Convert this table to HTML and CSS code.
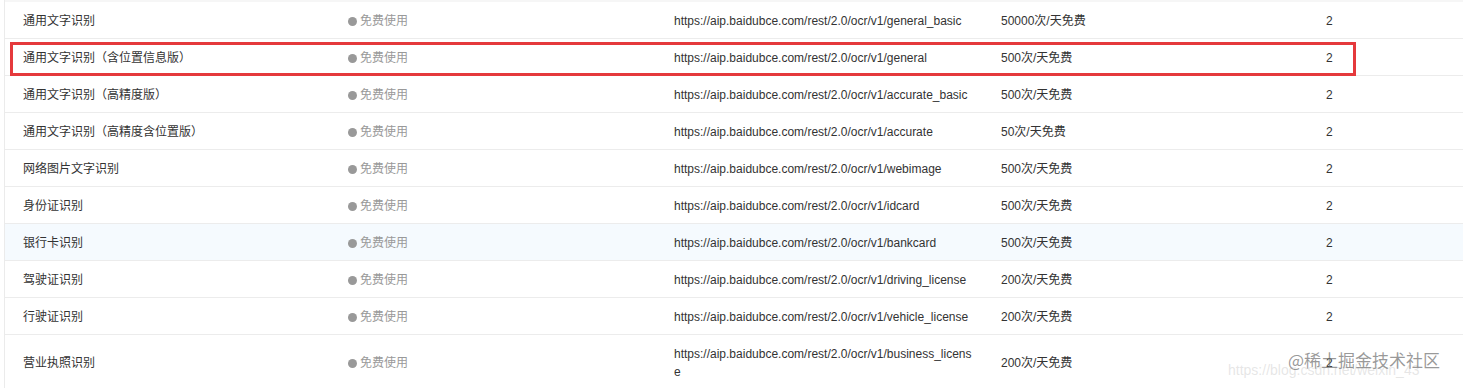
FILE: index.html
```html
<!DOCTYPE html>
<html lang="zh-CN">
<head>
<meta charset="utf-8">
<title>OCR</title>
<link rel="stylesheet" href="styles.css">
</head>
<body>
<div class="page">
  <div class="table">
    <div class="head-strip"></div>
    <div class="row"><div class="c name">通用文字识别</div><div class="c status"><span class="dot"></span>免费使用</div><div class="c url">https://aip.baidubce.com/rest/2.0/ocr/v1/general_basic</div><div class="c quota">50000次/天免费</div><div class="c num">2</div></div>
    <div class="row"><div class="c name">通用文字识别（含位置信息版）</div><div class="c status"><span class="dot"></span>免费使用</div><div class="c url">https://aip.baidubce.com/rest/2.0/ocr/v1/general</div><div class="c quota">500次/天免费</div><div class="c num">2</div></div>
    <div class="row"><div class="c name">通用文字识别（高精度版）</div><div class="c status"><span class="dot"></span>免费使用</div><div class="c url">https://aip.baidubce.com/rest/2.0/ocr/v1/accurate_basic</div><div class="c quota">500次/天免费</div><div class="c num">2</div></div>
    <div class="row"><div class="c name">通用文字识别（高精度含位置版）</div><div class="c status"><span class="dot"></span>免费使用</div><div class="c url">https://aip.baidubce.com/rest/2.0/ocr/v1/accurate</div><div class="c quota">50次/天免费</div><div class="c num">2</div></div>
    <div class="row"><div class="c name">网络图片文字识别</div><div class="c status"><span class="dot"></span>免费使用</div><div class="c url">https://aip.baidubce.com/rest/2.0/ocr/v1/webimage</div><div class="c quota">500次/天免费</div><div class="c num">2</div></div>
    <div class="row"><div class="c name">身份证识别</div><div class="c status"><span class="dot"></span>免费使用</div><div class="c url">https://aip.baidubce.com/rest/2.0/ocr/v1/idcard</div><div class="c quota">500次/天免费</div><div class="c num">2</div></div>
    <div class="row hover"><div class="c name">银行卡识别</div><div class="c status"><span class="dot"></span>免费使用</div><div class="c url">https://aip.baidubce.com/rest/2.0/ocr/v1/bankcard</div><div class="c quota">500次/天免费</div><div class="c num">2</div></div>
    <div class="row"><div class="c name">驾驶证识别</div><div class="c status"><span class="dot"></span>免费使用</div><div class="c url">https://aip.baidubce.com/rest/2.0/ocr/v1/driving_license</div><div class="c quota">200次/天免费</div><div class="c num">2</div></div>
    <div class="row"><div class="c name">行驶证识别</div><div class="c status"><span class="dot"></span>免费使用</div><div class="c url">https://aip.baidubce.com/rest/2.0/ocr/v1/vehicle_license</div><div class="c quota">200次/天免费</div><div class="c num">2</div></div>
    <div class="row last"><div class="c name">营业执照识别</div><div class="c status"><span class="dot"></span>免费使用</div><div class="c url">https://aip.baidubce.com/rest/2.0/ocr/v1/business_license</div><div class="c quota">200次/天免费</div><div class="c num">2</div></div>
  </div>
  <div class="highlight"></div>
  <div class="watermark">
    <span class="wm-url">https://blog.csdn.net/weixin_43</span>
    <span class="wm-main">@稀土掘金技术社区</span>
  </div>
</div>
</body>
</html>
```
FILE: styles.css
```css
html, body {
  margin: 0;
  padding: 0;
  background: #fff;
}
body {
  font-family: "Liberation Sans", Arial, "Noto Sans CJK SC", sans-serif;
  font-size: 12px;
  color: #333;
  overflow: hidden;
}
.page {
  position: relative;
  width: 1463px;
  height: 388px;
  overflow: hidden;
}
.table {
  margin-left: 4px;
  border-left: 1px solid #ebebeb;
}
.head-strip {
  height: 2px;
  background: #f6f6f6;
}
.row {
  display: grid;
  grid-template-columns: 325px 326px 327px 325px 1fr;
  border-bottom: 1px solid #ececec;
  line-height: 18px;
  align-items: center;
}
.row.hover {
  background: #f5fafe;
}
.c {
  padding: 10px 8px 8px 18px;
  min-width: 0;
}
.status {
  color: #999;
  display: flex;
  align-items: center;
}
.dot {
  width: 9px;
  height: 9px;
  border-radius: 50%;
  background: #999;
  margin-right: 3px;
}
.url {
  word-break: break-all;
  padding-right: 6px;
}
.highlight {
  position: absolute;
  left: 10px;
  top: 42px;
  width: 1340px;
  height: 28px;
  border: 3px solid #e5393c;
}
.watermark {
  position: absolute;
  left: 1228px;
  top: 349px;
  width: 235px;
  height: 30px;
}
.wm-url {
  position: absolute;
  left: 0;
  top: 13px;
  font-size: 14px;
  color: rgba(200, 200, 200, 0.45);
  white-space: nowrap;
}
.wm-main {
  position: absolute;
  left: 60px;
  top: 0;
  font-size: 17px;
  font-family: "Noto Sans CJK SC", sans-serif;
  color: rgba(120, 120, 120, 0.75);
  white-space: nowrap;
  line-height: 22px;
}
```
